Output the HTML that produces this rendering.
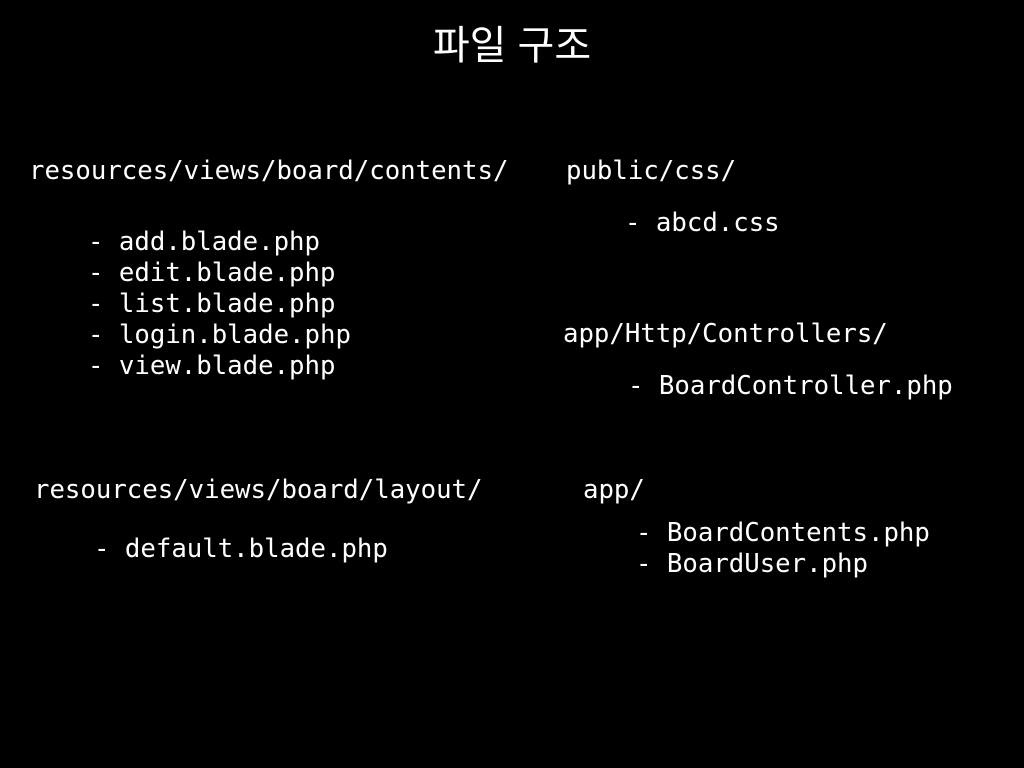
<!DOCTYPE html>
<html><head><meta charset="utf-8"><style>
html,body{margin:0;padding:0;background:#000;}
body{width:1024px;height:768px;position:relative;overflow:hidden;color:#fff;}
.t{position:absolute;font-family:"DejaVu Sans Mono","Liberation Mono",monospace;font-size:25.7px;line-height:31px;white-space:pre;}
.h{position:absolute;left:0;width:1024px;text-align:center;top:20px;font-family:"Liberation Sans","Noto Sans CJK KR",sans-serif;font-size:40px;line-height:52px;}
</style></head><body>
<div class="h">파일 구조</div>
<div class="t" style="left:29px;top:156px">resources/views/board/contents/</div>
<div class="t" style="left:566px;top:156px">public/css/</div>
<div class="t" style="left:625px;top:208px">- abcd.css</div>
<div class="t" style="left:88px;top:227px">- add.blade.php
- edit.blade.php
- list.blade.php
- login.blade.php
- view.blade.php</div>
<div class="t" style="left:563px;top:319px">app/Http/Controllers/</div>
<div class="t" style="left:628px;top:371px">- BoardController.php</div>
<div class="t" style="left:34px;top:475px">resources/views/board/layout/</div>
<div class="t" style="left:583px;top:475px">app/</div>
<div class="t" style="left:94px;top:534px">- default.blade.php</div>
<div class="t" style="left:636px;top:518px">- BoardContents.php
- BoardUser.php</div>
</body></html>
